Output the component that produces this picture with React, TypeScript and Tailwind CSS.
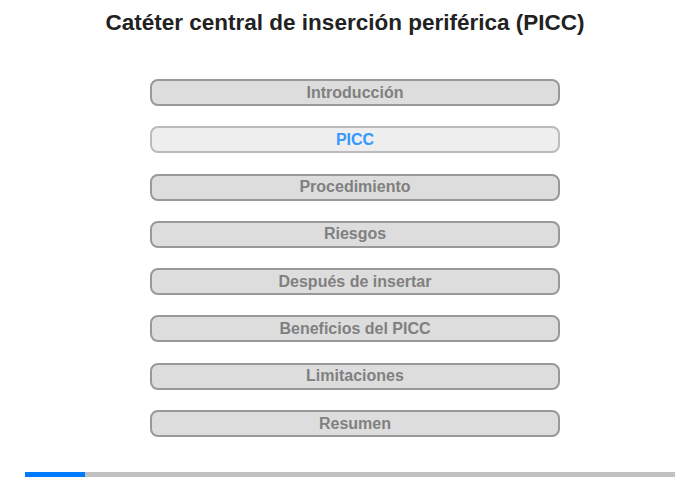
import React from "react";

const items = [
  "Introducción",
  "PICC",
  "Procedimiento",
  "Riesgos",
  "Después de insertar",
  "Beneficios del PICC",
  "Limitaciones",
  "Resumen",
];

export default function App() {
  return (
    <div
      className="w-[700px] h-[480px] bg-white relative"
      style={{ fontFamily: '"Liberation Sans", Arial, sans-serif' }}
    >
      <h1 className="pt-[9px] text-center text-[22.5px] leading-[27px] font-bold text-[#222] pr-[10px]">
        Catéter central de inserción periférica (PICC)
      </h1>
      <div className="ml-[150px] mt-[43px] w-[410px] flex flex-col gap-[20.3px]">
        {items.map((t, i) => {
          const active = i === 1;
          return (
            <div
              key={t}
              className={
                active
                  ? "h-[27px] rounded-[8px] border-2 border-[#bbb] bg-[#eee] text-[#3399ff] flex items-center justify-center text-[16px] font-bold"
                  : "h-[27px] rounded-[8px] border-2 border-[#999] bg-[#ddd] text-[#808080] flex items-center justify-center text-[16px] font-bold"
              }
            >
              {t}
            </div>
          );
        })}
      </div>
      <div className="absolute left-[25px] top-[472px] w-[650px] h-[5px] bg-[#c0c0c0] flex">
        <div className="w-[60px] h-full bg-[#007bff]" />
      </div>
    </div>
  );
}
